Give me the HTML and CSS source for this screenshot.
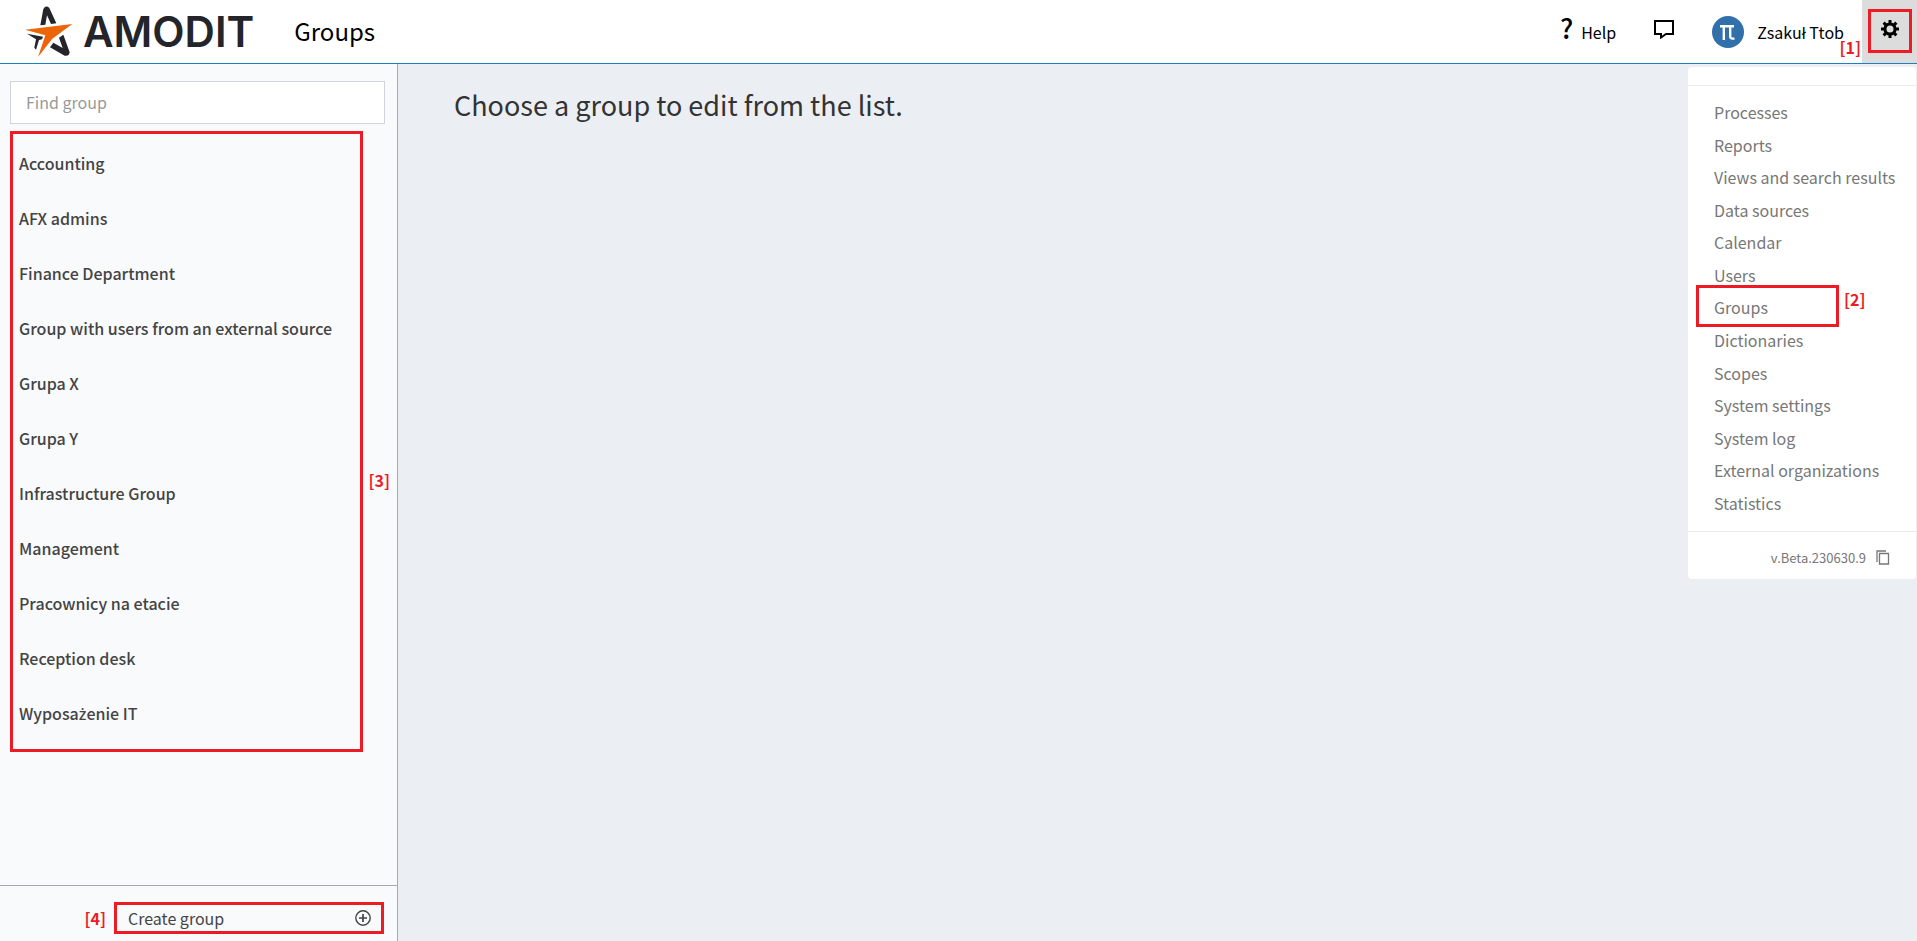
FILE: index.html
```html
<!DOCTYPE html>
<html lang="en">
<head>
  <meta charset="UTF-8">
  <meta name="viewport" content="width=device-width, initial-scale=1.0">
  <title>Groups</title>
  <link rel="stylesheet" href="styles.css">
</head>
<body>
  <header class="topbar">
    <a class="logo" href="#">
      <svg class="logo-star" viewBox="76 15 144 153" aria-hidden="true">
        <path fill="#23252a" d="M122 73 L131 24 Q139 11 149 21 L170 67 L154 69 L142 43 L137 71 Z"/>
        <path fill="#23252a" d="M82 98 L130 107 L127 115 L118 117 L109 146 L104 140 L109 115 Z"/>
        <path fill="#23252a" d="M178 110 L191 101 L210 154 Q208 167 195 164 L151 139 L161 125 L189 141 Z"/>
        <path fill="#ec6608" d="M76 86 L218 69 L158 113 L115 168 L137 103 Z"/>
      </svg>
      <span class="logo-name">AMODIT</span>
    </a>
    <h1 class="page-title">Groups</h1>

    <div class="topbar-right">
      <a class="help" href="#"><span class="help-mark">?</span>Help</a>
      <button class="icon-btn chat" type="button" aria-label="Messages">
        <svg width="20" height="20" viewBox="0 0 20 20" fill="none" stroke="#000" stroke-width="2">
          <path d="M1 2H19V15H12L7 18.5V15H1Z"/>
        </svg>
      </button>
      <a class="user" href="#">
        <svg class="avatar" viewBox="0 0 32 32" aria-hidden="true">
          <circle cx="16" cy="16" r="16" fill="#3170aa"/>
          <path d="M8 10.2H22M11.8 10V24M18.2 10V20.5Q18.2 23 22.5 22.6" fill="none" stroke="#fff" stroke-width="2.4"/>
        </svg>
        Zsakuł Ttob
      </a>
      <div class="settings">
        <span class="note note-1">[1]</span>
        <button class="icon-btn gear marked" type="button" aria-label="Settings">
          <svg width="18" height="18" viewBox="0 0 18 18">
            <g fill="#000">
              <rect x="7.5" y="0" width="3" height="18"/>
              <rect x="7.5" y="0" width="3" height="18" transform="rotate(45 9 9)"/>
              <rect x="7.5" y="0" width="3" height="18" transform="rotate(90 9 9)"/>
              <rect x="7.5" y="0" width="3" height="18" transform="rotate(135 9 9)"/>
              <circle cx="9" cy="9" r="6.6"/>
            </g>
            <circle cx="9" cy="9" r="3.5" fill="#dcdcdc"/>
          </svg>
        </button>
      </div>
    </div>
  </header>

  <div class="layout">
    <aside class="sidebar">
      <div class="search">
        <input class="search-input" type="text" placeholder="Find group" aria-label="Find group">
      </div>
      <div class="groups">
        <ul class="group-list marked">
          <li><a href="#">Accounting</a></li>
          <li><a href="#">AFX admins</a></li>
          <li><a href="#">Finance Department</a></li>
          <li><a href="#">Group with users from an external source</a></li>
          <li><a href="#">Grupa X</a></li>
          <li><a href="#">Grupa Y</a></li>
          <li><a href="#">Infrastructure Group</a></li>
          <li><a href="#">Management</a></li>
          <li><a href="#">Pracownicy na etacie</a></li>
          <li><a href="#">Reception desk</a></li>
          <li><a href="#">Wyposa<span class="accent">ż</span>enie IT</a></li>
        </ul>
        <span class="note note-3">[3]</span>
      </div>
      <div class="sidebar-footer">
        <span class="note">[4]</span>
        <button class="create-btn marked" type="button">
          Create group
          <svg width="16" height="16" viewBox="0 0 16 16" fill="none" stroke="#444" stroke-width="1.4">
            <circle cx="8" cy="8" r="7.2"/>
            <path d="M8 4V12M4 8H12" stroke-width="1.7"/>
          </svg>
        </button>
      </div>
    </aside>

    <main class="content">
      <h2>Choose a group to edit from the list.</h2>
    </main>

    <nav class="menu">
      <ul class="menu-list">
        <li><a href="#">Processes</a></li>
        <li><a href="#">Reports</a></li>
        <li><a href="#">Views and search results</a></li>
        <li><a href="#">Data sources</a></li>
        <li><a href="#">Calendar</a></li>
        <li><a href="#">Users</a></li>
        <li class="current"><a href="#">Groups</a><span class="frame marked"></span><span class="note note-2">[2]</span></li>
        <li><a href="#">Dictionaries</a></li>
        <li><a href="#">Scopes</a></li>
        <li><a href="#">System settings</a></li>
        <li><a href="#">System log</a></li>
        <li><a href="#">External organizations</a></li>
        <li><a href="#">Statistics</a></li>
      </ul>
      <div class="version">
        v.Beta.230630.9
        <button class="icon-btn" type="button" aria-label="Copy version">
          <svg width="14" height="15" viewBox="0 0 14 15" fill="none" stroke="#777" stroke-width="1.3">
            <path d="M1 12V1H10M3.5 3.5H12.5V14H3.5Z"/>
          </svg>
        </button>
      </div>
    </nav>
  </div>
</body>
</html>
```
FILE: styles.css
```css
* {
  box-sizing: border-box;
}

body {
  margin: 0;
  height: 100vh;
  display: flex;
  flex-direction: column;
  font-family: "Noto Sans CJK SC", "Noto Sans", sans-serif;
  font-size: 16px;
  line-height: 24px;
  color: #333;
  background: #ebeef3;
}

h1, h2, ul {
  margin: 0;
  padding: 0;
  font-weight: 400;
  list-style: none;
}

a {
  color: inherit;
  text-decoration: none;
}

button {
  font: inherit;
  color: inherit;
  background: none;
  border: 0;
  padding: 0;
  cursor: pointer;
}

/* red frames and numbers */
.marked {
  border: 3px solid #ed1c24;
}

.note {
  color: #ed1c24;
  font-size: 16px;
  font-weight: 700;
}

/* top bar */
.topbar {
  display: flex;
  align-items: center;
  height: 64px;
  padding-left: 25px;
  background: #fff;
  border-bottom: 1px solid #1a80c0;
  color: #000;
}

.logo {
  display: flex;
  align-items: center;
  gap: 10px;
}

.logo-star {
  width: 48px;
  height: 51px;
}

.logo-name {
  font-family: Inter, sans-serif;
  font-size: 42px;
  font-weight: 600;
  line-height: 48px;
  color: #23252a;
}

.page-title {
  margin-left: 40px;
  padding-bottom: 2px;
  font-size: 24px;
  line-height: 32px;
}

.topbar-right {
  display: flex;
  align-items: center;
  align-self: stretch;
  margin-left: auto;
}

.help {
  display: flex;
  align-items: center;
  gap: 8px;
}

.help-mark {
  padding-bottom: 8px;
  font-size: 27px;
  font-weight: 500;
}

.icon-btn {
  display: flex;
  align-items: center;
  justify-content: center;
}

.chat {
  margin: 0 38px;
  padding-bottom: 6px;
}

.user {
  display: flex;
  align-items: center;
  gap: 13px;
}

.avatar {
  width: 32px;
  height: 32px;
}

.settings {
  position: relative;
  align-self: stretch;
  width: 55px;
  margin-left: 18px;
  padding: 9px 5px 0 6px;
  background: #dcdcdc;
}

.gear {
  width: 44px;
  height: 44px;
  padding-bottom: 4px;
}

.note-1 {
  position: absolute;
  right: 56px;
  top: 35px;
}

/* layout */
.layout {
  position: relative;
  flex: 1;
  display: flex;
  min-height: 0;
}

.sidebar {
  display: flex;
  flex-direction: column;
  width: 398px;
  background: #f9fafc;
  border-right: 1px solid #a6a9b0;
}

.search {
  padding: 17px 12px 7px 10px;
}

.search-input {
  display: block;
  width: 100%;
  height: 43px;
  padding: 0 15px 2px;
  border: 1px solid #cfd4de;
  background: #fff;
  font: inherit;
}

.search-input::placeholder {
  color: #999;
}

.groups {
  flex: 1;
  position: relative;
  padding: 0 34px 0 10px;
}

.group-list {
  padding: 2px 6px 8px;
  font-weight: 500;
  color: #444;
}

.group-list a {
  display: block;
  line-height: 55px;
}

/* dotted z is missing from the main font */
.accent {
  font-family: "Noto Sans", sans-serif;
  line-height: 1;
}

.note-3 {
  position: absolute;
  right: 7px;
  top: 337px;
}

.sidebar-footer {
  display: flex;
  align-items: center;
  justify-content: flex-end;
  gap: 8px;
  height: 56px;
  padding: 8px 13px 0 0;
  border-top: 1px solid #a6a9b0;
}

.create-btn {
  display: flex;
  align-items: center;
  justify-content: space-between;
  width: 270px;
  height: 32px;
  padding: 0 10px 0 11px;
  color: #444;
}

.content {
  flex: 1;
  padding: 21px 56px;
}

.content h2 {
  font-size: 27px;
  line-height: 40px;
}

/* settings menu */
.menu {
  position: absolute;
  top: 3px;
  right: 1px;
  width: 228px;
  padding-top: 18px;
  background: #fff;
  border-radius: 4px;
  color: #777;
}

.menu-list {
  display: grid;
  grid-auto-rows: 1fr;
  height: 446px;
  padding: 10px 24px 12px 26px;
  border-top: 1px solid #ebebeb;
}

.menu-list li {
  display: flex;
  align-items: center;
  white-space: nowrap;
}

.current {
  position: relative;
}

.frame {
  position: absolute;
  left: -18px;
  top: -6px;
  width: 143px;
  height: 42px;
}

.note-2 {
  position: absolute;
  left: 130px;
  top: -4px;
}

.version {
  display: flex;
  align-items: center;
  justify-content: flex-end;
  gap: 10px;
  height: 48px;
  padding: 4px 26px 0 0;
  border-top: 1px solid #ebebeb;
  font-size: 13px;
}
```
